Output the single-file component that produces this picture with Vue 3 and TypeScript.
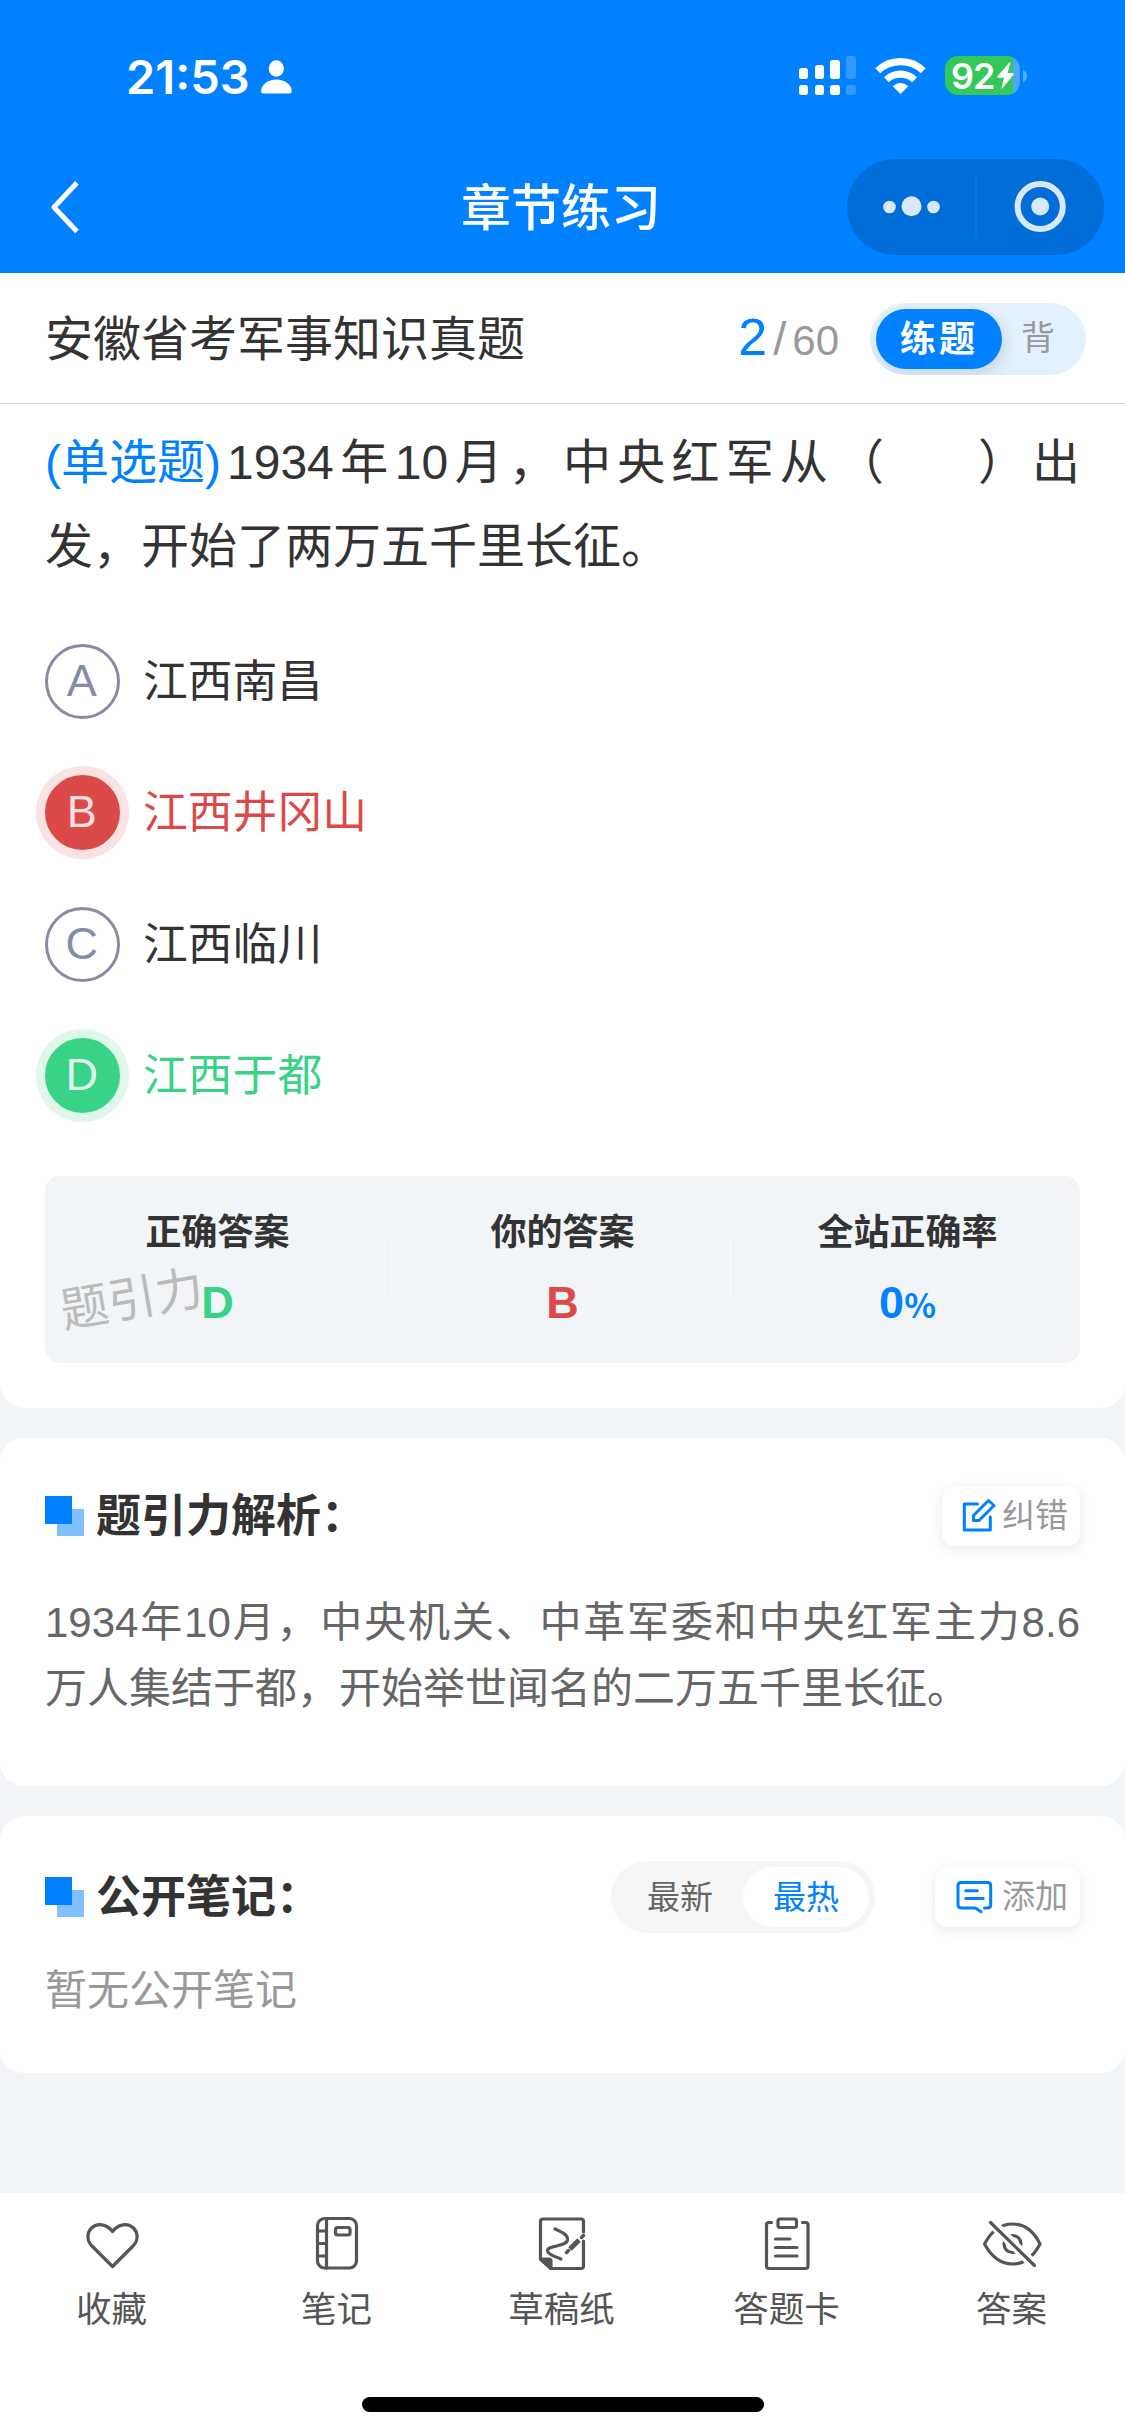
<script setup lang="ts">
interface Option { key: string; text: string; state: 'plain' | 'wrong' | 'right' }
interface Tab { id: string; label: string }

const options: Option[] = [
  { key: 'A', text: '江西南昌', state: 'plain' },
  { key: 'B', text: '江西井冈山', state: 'wrong' },
  { key: 'C', text: '江西临川', state: 'plain' },
  { key: 'D', text: '江西于都', state: 'right' },
]

const tabs: Tab[] = [
  { id: 'fav', label: '收藏' },
  { id: 'note', label: '笔记' },
  { id: 'draft', label: '草稿纸' },
  { id: 'card', label: '答题卡' },
  { id: 'answer', label: '答案' },
]
</script>

<template>
  <div class="page" lang="zh-CN">
    <header class="top">
      <div class="status">
        <div class="status-left">
          <span class="time">21:53</span>
          <svg class="person" width="31" height="34" viewBox="0 0 31 34" fill="#fff">
            <ellipse cx="15.3" cy="8.5" rx="7.6" ry="8.3" />
            <path d="M15.3 19.5C24 19.5 30.7 25 30.7 31Q30.7 33.5 28.2 33.5H2.6Q0.1 33.5 0.1 31C0.1 25 6.6 19.5 15.3 19.5Z" />
          </svg>
        </div>
        <div class="status-right">
          <svg width="57" height="39" viewBox="0 0 57 39" fill="#fff">
            <rect x="0" y="12" width="9" height="11" rx="2.5" />
            <rect x="16" y="9" width="9" height="14" rx="2.5" />
            <rect x="31" y="4" width="10" height="19" rx="2.5" />
            <rect x="47" y="0" width="10" height="23" rx="2.5" opacity=".2" />
            <rect x="0" y="29" width="9" height="10" rx="2.5" />
            <rect x="16" y="29" width="9" height="10" rx="2.5" />
            <rect x="31" y="29" width="10" height="10" rx="2.5" />
            <rect x="47" y="29" width="10" height="10" rx="2.5" opacity=".2" />
          </svg>
          <svg class="wifi" width="51" height="37" viewBox="0 0 51 37" fill="#fff">
            <path d="M0.4 11.3Q10.5 1 25.5 1T50.6 11.3L45.8 16.3Q37.5 8.3 25.5 8.3T5.2 16.3Z" />
            <path d="M9 20.2Q16 13.6 25.5 13.6T42 20.2L37.2 25.2Q32.3 20.8 25.5 20.8T13.8 25.2Z" />
            <path d="M17.8 29.2Q21.2 26.1 25.5 26.1T33.2 29.2L25.5 37Z" />
          </svg>
          <div class="battery">
            <span class="level">92</span>
            <svg class="bolt" width="17" height="27" viewBox="0 0 17 27" fill="#fff">
              <path d="M12.6 0.3L0.3 14.6Q0 15.7 1 15.7H7L4.3 26.2Q4.8 26.9 5.5 26.2L16.8 12.2Q17 11 16 11H10.6L13.4 0.9Q13.2 0.1 12.6 0.3Z" />
            </svg>
          </div>
          <svg class="cap" width="4" height="12" viewBox="0 0 4 12" fill="#fff" opacity=".35"><path d="M0 0Q4 2 4 6T0 12Z" /></svg>
        </div>
      </div>
      <div class="nav">
        <svg class="back" width="30" height="54" viewBox="0 0 30 54" fill="none" stroke="#fff" stroke-width="5" stroke-linejoin="round">
          <path d="M27 2.8L4 27.3L27 51.5" />
        </svg>
        <h1>章节练习</h1>
        <div class="capsule">
          <svg width="257" height="96" viewBox="0 0 257 96" fill="#d9e8f9">
            <circle cx="42.5" cy="48" r="6.3" />
            <circle cx="64.5" cy="47.2" r="10" />
            <circle cx="86.5" cy="48" r="6.3" />
            <rect x="128.5" y="18" width="1" height="60" fill="#1a7de0" />
            <circle cx="193.2" cy="47.5" r="22.6" fill="none" stroke="#d9e8f9" stroke-width="6" />
            <circle cx="193.2" cy="47.5" r="9" />
          </svg>
        </div>
      </div>
    </header>

    <section class="bar">
      <span class="paper">安徽省考军事知识真题</span>
      <span class="count"><b>2</b><i>/</i><span>60</span></span>
      <div class="mode"><span class="mode-on">练题</span><span class="mode-off">背</span></div>
    </section>

    <main class="question">
      <div class="stem">
        <div class="stem-line"><span class="kind">(单选题)</span><span class="n">1934</span><span class="n">年</span><span class="n">10</span><span class="z">月，中央红军从</span><span class="lp">（</span><span class="rp">）</span><span>出</span></div>
        <div class="stem-line">发，开始了两万五千里长征。</div>
      </div>
      <ul class="options">
        <li v-for="o in options" :key="o.key" :class="o.state">
          <span class="letter">{{ o.key }}</span><span class="otext">{{ o.text }}</span>
        </li>
      </ul>
      <div class="result">
        <div class="cell"><span class="label">正确答案</span><span class="value green">D</span></div>
        <div class="cell"><span class="label">你的答案</span><span class="value red">B</span></div>
        <div class="cell"><span class="label">全站正确率</span><span class="value blue">0<small>%</small></span></div>
        <span class="mark">题引力</span>
      </div>
    </main>

    <section class="card analysis">
      <div class="head">
        <span class="squares"></span>
        <h2>题引力解析：</h2>
        <button class="btn fix">
          <svg width="34" height="34" viewBox="0 0 34 34" fill="none" stroke="#0081ff" stroke-width="3">
            <path d="M15.5 6H2.3V32H28.3V19" stroke-linejoin="round" stroke-linecap="round" />
            <path d="M11.5 17.5L26.5 2.5L32 7.5L17 22.5H11.5Z" stroke-linejoin="round" />
          </svg>
          <span>纠错</span>
        </button>
      </div>
      <p class="body"><span class="just">1934年10月，中央机关、中革军委和中央红军主力8.6</span><span>万人集结于都，开始举世闻名的二万五千里长征。</span></p>
    </section>

    <section class="card notes">
      <div class="head">
        <span class="squares"></span>
        <h2>公开笔记：</h2>
        <div class="sort"><span>最新</span><span class="on">最热</span></div>
        <button class="btn add">
          <svg width="37" height="34" viewBox="0 0 37 34" fill="none" stroke="#0081ff" stroke-width="3" stroke-linecap="round" stroke-linejoin="round">
            <path d="M28.5 28H31.5Q34.7 28 34.7 24.8V5.7Q34.7 2.5 31.5 2.5H5.2Q2 2.5 2 5.7V24.8Q2 28 5.2 28H19.5L25 31.8" />
            <path d="M9.7 10.8H21.3M9.7 18.4H27.2" />
          </svg>
          <span>添加</span>
        </button>
      </div>
      <p class="empty">暂无公开笔记</p>
    </section>

    <footer class="tabs">
      <div class="tab-row">
        <div v-for="t in tabs" :key="t.id" class="tab">
          <svg width="60" height="60" viewBox="0 0 60 60" fill="none" stroke="#555" stroke-width="3.2" stroke-linecap="round" stroke-linejoin="round">
            <path v-if="t.id === 'fav'" d="M30.5 52.5L9.5 31.5C4.500 26 5 18.5 9.5 14C15 8.800 24.500 9.500 30.500 17.500C36.500 9.500 46 8.800 51.500 14C56 18.500 56.500 26 51.500 31.500Z" />
            <template v-else-if="t.id === 'note'">
              <rect x="10.5" y="4.5" width="39" height="49.5" rx="7" />
              <path d="M19.5 5V54M10.5 17H19.5M10.5 29.5H19.5M10.5 42H19.5" />
              <rect x="28.5" y="13.5" width="14.5" height="7.5" rx="2" />
            </template>
            <template v-else-if="t.id === 'draft'">
              <path d="M51.5 18V7.5Q51.500 5 49 5H11Q8.500 5 8.500 7.500V45L19 54.500H49Q51.500 54.500 51.500 52V27" />
              <path d="M8.5 45H17Q19 45 19 47V54.5Z" fill="#555" />
              <path d="M23 15C29 18 36 20 35.5 26C34.5 33 15 31 15.5 37C16 41 24 43 29 45" />
              <path d="M38 35L47 26" stroke-width="5" stroke-linecap="butt" />
              <path d="M34.5 38.5L36.5 36.5M49.5 23.5L51.5 21.5" stroke-width="3.5" />
            </template>
            <template v-else-if="t.id === 'card'">
              <path d="M14.5 8.5H12Q9.5 8.5 9.5 11V52Q9.5 54.5 12 54.5H48.5Q51 54.5 51 52V11Q51 8.5 48.5 8.5H45.5" />
              <rect x="21" y="5" width="18.5" height="8.5" rx="2" />
              <path d="M18.5 25H33M18.5 33.5H40M18.5 42H40" />
            </template>
            <template v-else>
              <path d="M2.5 30Q13 10 30.500 10T58 30Q47.500 50 30.500 50T2.500 30Z" />
              <circle cx="30.5" cy="30" r="8.5" />
              <path d="M8 7L54 53" stroke="#fff" stroke-width="10" stroke-linecap="butt" />
              <path d="M8.5 8.5L52.5 51.5" />
            </template>
          </svg>
          <span>{{ t.label }}</span>
        </div>
      </div>
      <div class="home"></div>
    </footer>
  </div>
</template>

<style>
html, body { margin: 0; background: #f1f5f8; }
</style>

<style scoped>
* { box-sizing: border-box; }
.page {
  width: 1125px; height: 2436px; display: flex; flex-direction: column; overflow: hidden;
  background: #f1f5f8; color: #333;
  font-family: "Liberation Sans", "Noto Sans CJK SC", sans-serif;
  text-spacing-trim: space-all;
}
h1, h2, p, ul { margin: 0; padding: 0; font-weight: 400; }
ul { list-style: none; }
svg { display: block; flex: none; }
.top { height: 273px; background: #0081ff; color: #fff; }
.status { height: 159px; display: flex; justify-content: space-between; padding: 56px 98px 0 126px; }
.status-left { display: flex; }
.time { width: 135px; font: 560 47px/42px Inter, sans-serif; white-space: nowrap; }
.person { margin-top: 4px; }
.status-right { display: flex; }
.wifi { margin: 1px 19px 0 19px; }
.battery {
  width: 75px; height: 39px; border-radius: 13px; display: flex; padding: 0 0 0 7px;
  background: linear-gradient(90deg, #34c759 0 68px, #4da7ff 68px);
}
.level { width: 45px; font: 600 36px/41px Inter, sans-serif; letter-spacing: -1px; text-indent: -1px; }
.bolt { margin-top: 6px; }
.cap { margin: 14px 0 0 3px; }
.nav { height: 96px; display: flex; padding: 0 21px 0 50px; }
.back { margin-top: 21px; }
h1 { font-size: 50px; line-height: 101px; font-weight: 500; margin-left: 381px; flex: 1; }
.capsule { width: 257px; height: 96px; border-radius: 48px; background: #006dd9; }
.bar { height: 131px; background: #fff; border-bottom: 1.5px solid #d9d9d9; display: flex; align-items: center; padding: 1px 39px 0 45px; flex: none; }
.paper { font-size: 48px; line-height: 73px; padding-top: 2px; flex: 1; }
.count { display: flex; align-items: baseline; font-size: 42px; line-height: 70px; color: #999; margin-right: 31px; }
.count b { font-weight: 400; font-size: 52px; color: #0081ff; }
.count i { font-style: normal; font-size: 47px; margin: 0 6px; }
.mode { width: 216px; height: 72px; border-radius: 36px; background: #e3f1ff; display: flex; align-items: center; padding: 0 6px; overflow: hidden; }
.mode-on { width: 126px; height: 60px; border-radius: 30px; background: #0081ff; color: #fff; font-size: 36px; line-height: 61px; font-weight: 700; letter-spacing: 3px; text-align: center; box-shadow: 3px 6px 15px rgba(0, 0, 0, .12); }
.mode-off { font-size: 34px; color: #999; line-height: 61px; margin-left: 19px; }
.question { height: 1004px; flex: none; background: #fff; border-radius: 0 0 24px 24px; padding: 17px 45px 0; }
.stem-line { height: 84px; line-height: 84px; font-size: 48px; white-space: nowrap; display: flex; }
.kind { color: #0081ff; margin-right: 6px; }
.n { margin-right: 6.5px; }
.z { letter-spacing: 6.2px; }
.lp { margin: 0 94px 0 2px; }
.rp { margin-right: 6px; }
.options { padding-top: 55px; height: 587px; }
.options li { height: 75px; margin-bottom: 56.3px; display: flex; align-items: center; }
.letter { width: 75px; height: 75px; border-radius: 50%; border: 3px solid #878ca5; color: #878ca5; font-size: 45px; line-height: 67px; text-align: center; text-indent: -1.5px; margin-right: 23px; }
.otext { font-size: 44.8px; line-height: 74px; height: 75px; }
.wrong { color: #db4949; }
.right { color: #38d387; }
.wrong .letter { border-color: #db4949; background: #db4949; color: #fae0e0; box-shadow: 0 0 0 9px #f9e3e3; }
.right .letter { border-color: #38d387; background: #38d387; color: #e0f8eb; box-shadow: 0 0 0 9px #e0f8eb; }
.result { position: relative; height: 187px; border-radius: 15px; background: #f1f5f8; display: flex; }
.cell { width: 345px; display: flex; flex-direction: column; align-items: center; padding-top: 30px; position: relative; }
.cell + .cell::before { content: ""; position: absolute; left: -2px; top: 63px; width: 1px; height: 60px; background: #ececec; }
.label { font-size: 36px; line-height: 54px; font-weight: 700; }
.value { font-size: 45px; line-height: 60px; font-weight: 700; margin-top: 13px; }
.value small { font: 700 33px/33px "Noto Sans CJK SC", sans-serif; }
.green { color: #38d387; }
.red { color: #db4949; }
.blue { color: #0081ff; }
.mark { position: absolute; left: 15px; top: 88px; font-size: 48px; line-height: 72px; color: #bbb; transform: rotate(-9.7deg); }
.card { background: #fff; border-radius: 24px; margin-top: 30px; flex: none; padding: 0 45px; }
.analysis { height: 348px; padding-top: 48px; }
.notes { height: 257px; padding-top: 45px; }
.head { display: flex; align-items: center; height: 60px; }
.notes .head { height: 72px; }
.squares { width: 39px; height: 40px; margin-right: 12px; background: linear-gradient(#0081ff, #0081ff) 0 0 / 27px 28px no-repeat, linear-gradient(#80c0ff, #80c0ff) 12px 13px / 27px 27px no-repeat; }
h2 { font-size: 45px; line-height: 60px; padding-top: 1px; font-weight: 700; flex: 1; }
.btn { appearance: none; border: 0; margin: 0; padding: 0; font-family: inherit; background: #fff; height: 60px; border-radius: 12px; box-shadow: 0 3px 12px rgba(0, 0, 0, .09); display: flex; align-items: center; font-size: 33px; line-height: 60px; color: #999; }
.fix { width: 138px; padding-left: 20px; }
.fix svg { margin: 0 6px 2px 0; }
.add { width: 145px; padding-left: 21px; margin-left: 60px; }
.add svg { margin: 0 9px 0 0; }
.body { margin-top: 44px; font-size: 42px; line-height: 66px; color: #666; }
.body span { display: block; white-space: nowrap; }
.body .just { text-align: justify; text-align-last: justify; }
.sort { width: 264px; height: 72px; border-radius: 36px; background: #f6f6f6; padding: 6px; display: flex; font-size: 33px; color: #666; }
.sort span { width: 126px; height: 60px; line-height: 61px; text-align: center; border-radius: 30px; }
.sort .on { background: #fff; color: #0081ff; }
.empty { margin-top: 25px; font-size: 42px; line-height: 66px; color: #999; }
.tabs { margin-top: auto; height: 243px; background: #fff; flex: none; padding-top: 21px; }
.tab-row { display: flex; height: 183px; margin-left: -1px; }
.tab { width: 225px; display: flex; flex-direction: column; align-items: center; font-size: 35.5px; line-height: 54px; color: #555; }
.tab span { margin-top: 9px; }
.home { width: 402px; height: 15px; border-radius: 8px; background: #000; margin: 0 auto; }
</style>
